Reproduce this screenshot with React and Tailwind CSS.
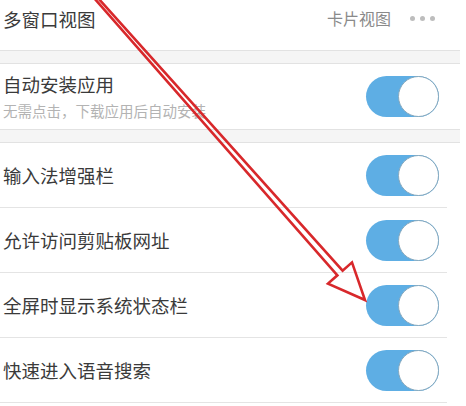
import React from 'react';

const font = { fontFamily: '"Noto Sans CJK SC", "Noto Sans", sans-serif' };

function Toggle() {
    return (
        <div className="w-[73px] h-[41px] rounded-full bg-[#5eaee4] flex justify-end items-center shrink-0">
            <div className="w-[41px] h-[41px] rounded-full bg-white border-[1.5px] border-[#86a8bd]" />
        </div>
    );
}

function Band() {
    return <div className="w-[460px] h-[14px] border-y border-[#e2e2e2] bg-[#f5f5f5]" />;
}

const rows = ['输入法增强栏', '允许访问剪贴板网址', '全屏时显示系统状态栏', '快速进入语音搜索'];

export default function App() {
    return (
        <div className="relative w-[466px] h-[406px] overflow-hidden bg-white text-[#3a3a3a]" style={font}>
            {/* header */}
            <div className="h-[50px] flex items-start justify-between pl-[3px] pt-[7px]">
                <span className="text-[18.5px] leading-[24px]">多窗口视图</span>
                <div className="flex items-center h-[22px] pr-[31px]">
                    <span className="text-[16px] leading-[22px] text-[#8a8a8a]">卡片视图</span>
                    <div className="flex gap-[5px] ml-[19px]">
                        <div className="w-[5px] h-[5px] rounded-full bg-[#bdbdbd]" />
                        <div className="w-[5px] h-[5px] rounded-full bg-[#bdbdbd]" />
                        <div className="w-[5px] h-[5px] rounded-full bg-[#bdbdbd]" />
                    </div>
                </div>
            </div>
            <Band />

            {/* auto install */}
            <div className="h-[65px] w-[447px] flex items-center justify-between pl-[3px] pr-[8px]">
                <div className="flex flex-col">
                    <span className="text-[18.5px] leading-[24px]">自动安装应用</span>
                    <span className="text-[14.5px] leading-[20px] mt-[5px] text-[#b3b3b3]">无需点击，下载应用后自动安装</span>
                </div>
                <Toggle />
            </div>
            <Band />

            {rows.map((label) => (
                <div key={label} className="h-[65px] w-[447px] flex items-center justify-between pl-[3px] pr-[8px] border-b border-[#e4e4e4]">
                    <span className="text-[18.5px] leading-[24px]">{label}</span>
                    <Toggle />
                </div>
            ))}

            {/* red annotation arrow */}
            <svg className="absolute inset-0 pointer-events-none" width="466" height="406" viewBox="0 0 466 406">
                <polygon
                    points="97.1,-3 342.6,270.7 352,262.4 365,300 328,283.6 337.4,275.3 94.9,-1"
                    fill="none"
                    stroke="#d8282b"
                    strokeWidth="2.6"
                    strokeLinejoin="miter"
                />
            </svg>
        </div>
    );
}
